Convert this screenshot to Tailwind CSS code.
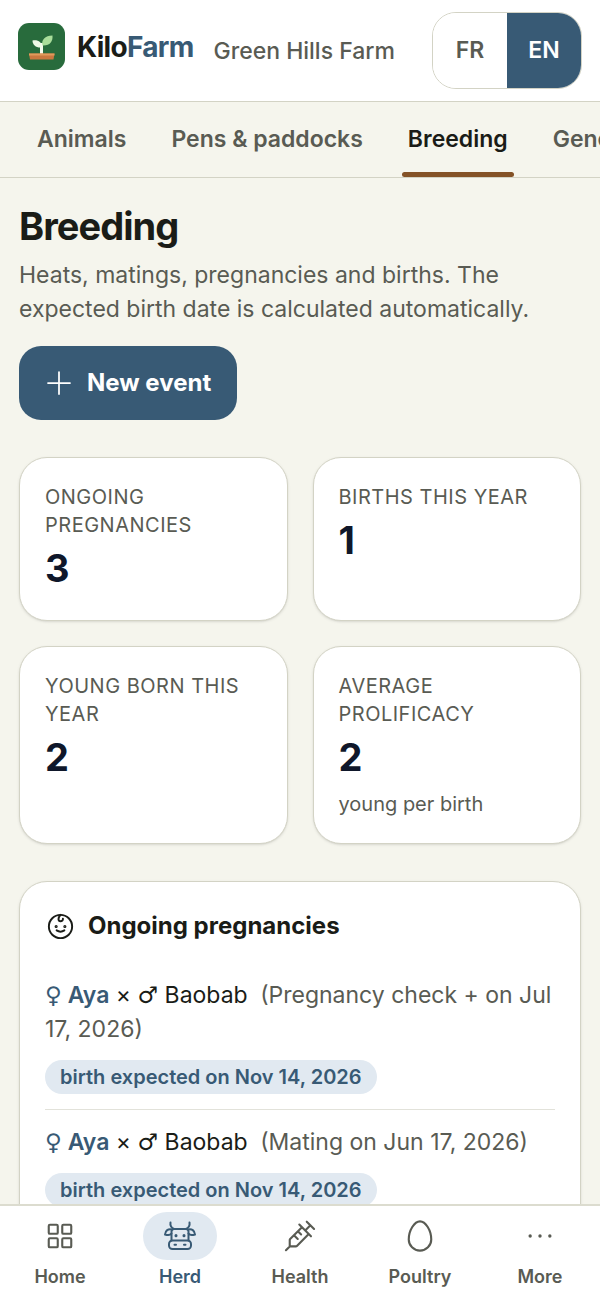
<!DOCTYPE html>
<html lang="en">
<head>
  <meta charset="UTF-8">
  <meta name="viewport" content="width=device-width, initial-scale=1.0">
  <title>Breeding - KiloFarm</title>
  <script src="https://cdn.jsdelivr.net/npm/@tailwindcss/browser@4"></script>
</head>
<body class="flex h-screen flex-col overflow-hidden bg-[#f5f5ed] font-['Inter','DejaVu_Sans',sans-serif] text-[#1a1c17]">

  <header class="flex shrink-0 items-center border-b border-[#d3d3c5] bg-white px-[18px] py-3">
    <a href="#" class="flex items-center gap-3 pb-2">
      <svg class="size-[47px]" viewBox="0 0 47 47">
        <rect width="47" height="47" rx="11" fill="#286b3c"/>
        <path d="M23.500 31V20" stroke="#f4faee" stroke-width="3" fill="none"/>
        <path d="M14.500 17.500C20 16.500 24 19 23.500 24.500C18 25 14.500 22 14.500 17.500Z" fill="#eef8e6"/>
        <path d="M34.500 12.500C27 12.500 23 17 24.500 22.500C31.500 23 35 19 34.500 12.500Z" fill="#a9dd9a"/>
        <path d="M11 30.500H36.500L35.500 36.500H12Z" fill="#c9783f"/>
        <path d="M11 30.500H36.500V32.500H11Z" fill="#e09a5c"/>
      </svg>
      <span class="text-[28px] leading-9 font-bold tracking-tight">Kilo<span class="text-[#385a75]">Farm</span></span>
    </a>
    <span class="ml-5 flex-1 truncate text-[23px] leading-8 font-medium text-[#595b53]">Green Hills Farm</span>
    <div class="flex h-[77px] overflow-hidden rounded-[24px] border border-[#d3d3c5] text-[23px] font-semibold">
      <button class="w-[74px] bg-white text-[#595b53]">FR</button>
      <button class="w-[74px] bg-[#385a75] text-white">EN</button>
    </div>
  </header>

  <nav class="flex shrink-0 gap-[33px] overflow-hidden border-b border-[#d3d3c5] pl-[31px] text-[23px] leading-[75px] font-semibold whitespace-nowrap text-[#595b53]">
    <a href="#" class="px-[6px]">Animals</a>
    <a href="#" class="px-[6px]">Pens &amp; paddocks</a>
    <a href="#" class="relative px-[6px] text-[#1a1c17]">Breeding<span class="absolute inset-x-0 bottom-0 h-[5px] rounded-full bg-[#845227]"></span></a>
    <a href="#" class="px-[6px]">Genetics</a>
  </nav>

  <main class="min-h-0 flex-1 overflow-y-auto px-[19px] pt-6 [scrollbar-width:none]">
    <h1 class="text-[38px] leading-[48px] font-bold tracking-tight">Breeding</h1>
    <p class="mt-2 text-[23px] leading-[34px] text-[#595b53]">Heats, matings, pregnancies and births. The expected birth date is calculated automatically.</p>
    <button class="mt-5 flex h-[74px] items-center gap-3 rounded-[22px] bg-[#385a75] pr-[26px] pl-6 text-[24px] font-bold text-white">
      <svg class="size-8" viewBox="0 0 256 256" fill="none" stroke="currentColor" stroke-width="14" stroke-linecap="round"><path d="M40 128H216M128 40V216"/></svg>
      New event
    </button>

    <!-- Key figures -->
    <div class="mt-[37px] grid grid-cols-2 gap-[25px]">
      <div class="rounded-[28px] border border-[#d3d3c5] bg-white p-[25px] shadow-sm">
        <div class="text-[20px] leading-7 tracking-wide text-[#595b53] uppercase">Ongoing pregnancies</div>
        <div class="pt-[5px] pb-[3px] text-[38px] leading-[48px] font-bold text-[#0f172a]">3</div>
      </div>
      <div class="rounded-[28px] border border-[#d3d3c5] bg-white p-[25px] shadow-sm">
        <div class="text-[20px] leading-7 tracking-wide text-[#595b53] uppercase">Births this year</div>
        <div class="pt-[5px] pb-[3px] text-[38px] leading-[48px] font-bold text-[#0f172a]">1</div>
      </div>
      <div class="rounded-[28px] border border-[#d3d3c5] bg-white p-[25px] shadow-sm">
        <div class="text-[20px] leading-7 tracking-wide text-[#595b53] uppercase">Young born this year</div>
        <div class="pt-[5px] pb-[3px] text-[38px] leading-[48px] font-bold text-[#0f172a]">2</div>
      </div>
      <div class="rounded-[28px] border border-[#d3d3c5] bg-white p-[25px] shadow-sm">
        <div class="text-[20px] leading-7 tracking-wide text-[#595b53] uppercase">Average prolificacy</div>
        <div class="pt-[5px] pb-[3px] text-[38px] leading-[48px] font-bold text-[#0f172a]">2</div>
        <div class="mt-[6px] text-[20px] leading-7 text-[#595b53]">young per birth</div>
      </div>
    </div>

    <!-- Ongoing pregnancies -->
    <section class="mt-[37px] rounded-[28px] border border-[#d3d3c5] bg-white p-[25px] shadow-sm">
      <h2 class="flex items-center gap-3 text-[24px] leading-[38px] font-bold">
        <svg class="size-[31px]" viewBox="0 0 256 256" fill="none" stroke="currentColor" stroke-width="16" stroke-linecap="round" stroke-linejoin="round">
          <circle cx="128" cy="128" r="96"/>
          <path d="M128 32C104 58 108 84 128 84C141 84 150 76 148 64M96 160C114 172 142 172 160 160"/>
          <circle cx="92" cy="128" r="5"/><circle cx="164" cy="128" r="5"/>
        </svg>
        Ongoing pregnancies
      </h2>
      <ul class="mt-[18px] divide-y divide-[#e2e2da] text-[23px] leading-[34px]">
        <li class="py-[15px]">
          <div><a href="#" class="font-semibold text-[#385a75]">♀ Aya</a> × ♂ Baobab <span class="ml-[6px] text-[#595b53]">(Pregnancy check + on Jul 17, 2026)</span></div>
          <span class="mt-[14px] block w-fit rounded-full bg-[#e1e9f1] px-[15px] text-[20px] font-semibold text-[#385a75]">birth expected on Nov 14, 2026</span>
        </li>
        <li class="py-[15px]">
          <div><a href="#" class="font-semibold text-[#385a75]">♀ Aya</a> × ♂ Baobab <span class="ml-[6px] text-[#595b53]">(Mating on Jun 17, 2026)</span></div>
          <span class="mt-[14px] block w-fit rounded-full bg-[#e1e9f1] px-[15px] text-[20px] font-semibold text-[#385a75]">birth expected on Nov 14, 2026</span>
        </li>
      </ul>
    </section>
  </main>

  <!-- Bottom bar -->
  <nav class="grid h-[94px] shrink-0 grid-cols-5 border-t-2 border-[#dcdccf] bg-white pt-[6px] text-[18px] leading-6 font-semibold text-[#595b53]">
    <a href="#" class="flex flex-col items-center gap-[5px]">
      <span class="flex h-12 w-[74px] items-center justify-center rounded-full">
        <svg class="size-9" viewBox="0 0 256 256" fill="none" stroke="currentColor" stroke-width="15" stroke-linejoin="round"><rect x="48" y="48" width="64" height="64" rx="8"/><rect x="144" y="48" width="64" height="64" rx="8"/><rect x="48" y="144" width="64" height="64" rx="8"/><rect x="144" y="144" width="64" height="64" rx="8"/></svg>
      </span>
      Home
    </a>
    <a href="#" class="flex flex-col items-center gap-[5px] text-[#385a75]">
      <span class="flex h-12 w-[74px] items-center justify-center rounded-full bg-[#e1e9f1]">
        <svg class="size-9" viewBox="0 0 36 36" fill="none" stroke="currentColor" stroke-width="2" stroke-linecap="round" stroke-linejoin="round">
          <path d="M8.500 4.500C8 7.500 9 9.500 12 11H24C27 9.500 28 7.500 27.500 4.500"/>
          <path d="M9.500 22.500V13.500Q9.500 11 12 11H24Q26.500 11 26.500 13.500V22.500"/>
          <path d="M10 11.500C6 10.500 3.500 12.500 3 16.500C6 17.500 8.500 17 9.500 15.500M26 11.500C30 10.500 32.500 12.500 33 16.500C30 17.500 27.500 17 26.500 15.500"/>
          <rect x="7" y="22.500" width="22" height="8.500" rx="3.500"/>
          <path d="M14 17.500V17.700M22 17.500V17.700" stroke-width="3"/>
          <path d="M12.500 26.700H14M22 26.700H23.500"/>
        </svg>
      </span>
      Herd
    </a>
    <a href="#" class="flex flex-col items-center gap-[5px]">
      <span class="flex h-12 w-[74px] items-center justify-center rounded-full">
        <svg class="size-9" viewBox="0 0 256 256" fill="none" stroke="currentColor" stroke-width="15" stroke-linecap="round" stroke-linejoin="round"><path d="M176 26L228 78M202 52L165 89M123 47L206 130M142 66L58 150Q55 153 55 157V202H99Q103 202 106 199L190 114M55 202L28 229M85 122L112 149M113 94L136 117"/></svg>
      </span>
      Health
    </a>
    <a href="#" class="flex flex-col items-center gap-[5px]">
      <span class="flex h-12 w-[74px] items-center justify-center rounded-full">
        <svg class="size-9" viewBox="0 0 256 256" fill="none" stroke="currentColor" stroke-width="15"><path d="M208 152A80 80 0 0 1 48 152C48 88 88 24 128 24S208 88 208 152Z"/></svg>
      </span>
      Poultry
    </a>
    <a href="#" class="flex flex-col items-center gap-[5px]">
      <span class="flex h-12 w-[74px] items-center justify-center rounded-full">
        <svg class="size-9" viewBox="0 0 256 256" fill="currentColor"><circle cx="58" cy="128" r="12"/><circle cx="128" cy="128" r="12"/><circle cx="198" cy="128" r="12"/></svg>
      </span>
      More
    </a>
  </nav>

</body>
</html>
